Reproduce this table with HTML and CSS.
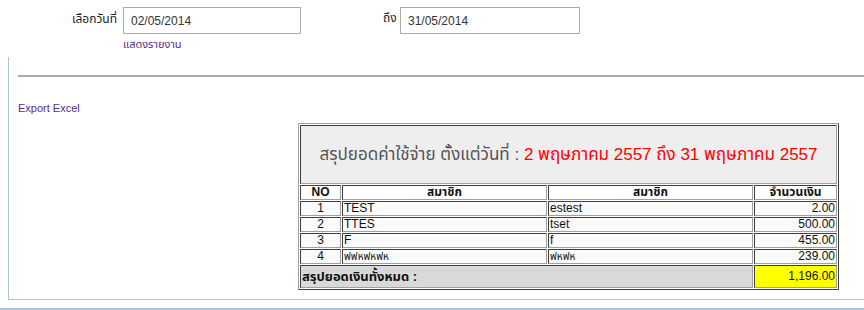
FILE: index.html
```html
<!DOCTYPE html>
<html lang="th">
<head>
<meta charset="utf-8">
<title>รายงาน</title>
<link rel="stylesheet" href="styles.css">
</head>
<body>
<div class="filter">
  <div class="label">เลือกวันที่</div>
  <div class="field">
    <div class="input">02/05/2014</div>
    <a class="link show" href="#">แสดงรายงาน</a>
  </div>
  <div class="label to">ถึง</div>
  <div class="field second">
    <div class="input wide">31/05/2014</div>
  </div>
</div>
<div class="panel">
  <div class="rule"></div>
  <a class="link export" href="#">Export Excel</a>
  <table class="report">
    <colgroup>
      <col class="c-no">
      <col class="c-name">
      <col class="c-name">
      <col class="c-amt">
    </colgroup>
    <tr>
      <td class="title" colspan="4"><span class="title-grey">สรุปยอดค่าใช้จ่าย ตั้งแต่วันที่ : </span><span class="title-red">2 พฤษภาคม 2557 ถึง 31 พฤษภาคม 2557</span></td>
    </tr>
    <tr class="head">
      <td>NO</td>
      <td>สมาชิก</td>
      <td>สมาชิก</td>
      <td>จำนวนเงิน</td>
    </tr>
    <tr class="row">
      <td class="center">1</td><td>TEST</td><td>estest</td><td class="num">2.00</td>
    </tr>
    <tr class="row">
      <td class="center">2</td><td>TTES</td><td>tset</td><td class="num">500.00</td>
    </tr>
    <tr class="row">
      <td class="center">3</td><td>F</td><td>f</td><td class="num">455.00</td>
    </tr>
    <tr class="row">
      <td class="center">4</td><td class="small">ฟฟหฟหฟห</td><td class="small">ฟหฟห</td><td class="num">239.00</td>
    </tr>
    <tr class="total">
      <td class="total-label" colspan="3">สรุปยอดเงินทั้งหมด :</td>
      <td class="total-amt">1,196.00</td>
    </tr>
  </table>
</div>
<div class="footer-line"></div>
</body>
</html>
```

FILE: styles.css
```css
html, body {
  margin: 0;
  padding: 0;
  background: #ffffff;
}
body {
  font-family: "Liberation Sans", "Noto Sans Thai", Tahoma, sans-serif;
  font-size: 12px;
  color: #333333;
  width: 864px;
  height: 310px;
  overflow: hidden;
}
.filter {
  display: flex;
  align-items: flex-start;
  padding-top: 7px;
  height: 57px;
  box-sizing: border-box;
}
.label {
  width: 117px;
  text-align: right;
  padding-top: 5px;
  font-size: 12px;
  line-height: 14px;
  color: #222222;
}
.label.to {
  width: 17px;
  text-align: left;
  margin-left: 82px;
  padding-top: 4px;
}
.field {
  display: flex;
  flex-direction: column;
  margin-left: 6px;
}
.field.second {
  margin-left: 0;
}
.input {
  width: 178px;
  height: 27px;
  box-sizing: border-box;
  border: 1px solid #aaaaaa;
  padding: 6px 0 0 7px;
  font-size: 12px;
  line-height: 14px;
  color: #333333;
}
.input.wide {
  width: 180px;
}
.link {
  color: #5b2a8f;
  text-decoration: none;
  font-size: 11px;
  line-height: 13px;
}
.show {
  margin-top: 4px;
}
.panel {
  margin-left: 8px;
  border-left: 1px solid #a8c3dc;
  border-bottom: 1px solid #a8c3dc;
  padding: 18px 0 9px 9px;
  display: flex;
  flex-direction: column;
  align-items: flex-start;
}
.rule {
  align-self: stretch;
  height: 2px;
  background: #aaaaaa;
}
.export {
  margin-top: 25px;
}
.report {
  margin-top: 8px;
  margin-left: 280px;
  width: 541px;
  table-layout: fixed;
  border-collapse: separate;
  border-spacing: 1px;
  border: 1px solid;
  border-color: #a0a0a0 #404040 #404040 #a0a0a0;
  font-size: 12px;
}
.c-no { width: 41px; }
.c-name { width: 205px; }
.c-amt { width: 83px; }
.report td {
  border: 1px solid;
  border-color: #404040 #a0a0a0 #a0a0a0 #404040;
  padding: 0 1px;
  line-height: 13px;
  height: 13px;
  color: #111111;
  background: #fafafa;
  white-space: nowrap;
  overflow: hidden;
}
.report td.title {
  height: 59px;
  background: #eeeeee;
  text-align: center;
  font-size: 17px;
  line-height: 22px;
  padding-top: 0;
  box-sizing: border-box;
}
.title-grey {
  color: #555555;
}
.title-red {
  color: #ff0000;
}
.head td {
  background: #ffffff;
  font-weight: bold;
  text-align: center;
}
.center { text-align: center; }
.num { text-align: right; }
.small { font-size: 10px; }
.report td.total-label {
  background: #d9d9d9;
  font-weight: bold;
  font-size: 13px;
  height: 21px;
}
.report td.total-amt {
  background: #ffff00;
  text-align: right;
}
.footer-line {
  margin-top: 8px;
  height: 2px;
  background: #a8c3dc;
}
```
